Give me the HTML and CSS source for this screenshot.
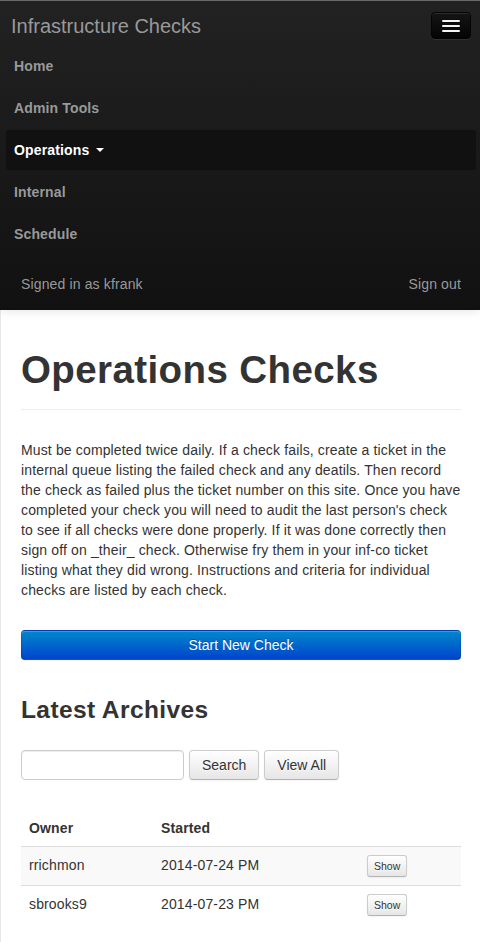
FILE: index.html
```html
<!DOCTYPE html>
<html lang="en">
<head>
<meta charset="utf-8">
<title>Operations Checks</title>
<link rel="stylesheet" href="styles.css">
</head>
<body>
<div class="page">
  <header class="navbar">
    <div class="navbar-head">
      <a class="brand" href="#">Infrastructure Checks</a>
      <button class="btn-navbar" type="button" aria-label="Toggle navigation">
        <span class="icon-bar"></span>
        <span class="icon-bar"></span>
        <span class="icon-bar"></span>
      </button>
    </div>
    <ul class="nav">
      <li><a href="#">Home</a></li>
      <li><a href="#">Admin Tools</a></li>
      <li class="active"><a href="#">Operations <b class="caret"></b></a></li>
      <li><a href="#">Internal</a></li>
      <li><a href="#">Schedule</a></li>
    </ul>
    <div class="navbar-user">
      <span>Signed in as kfrank</span>
      <a href="#">Sign out</a>
    </div>
  </header>

  <main class="container">
    <div class="page-header">
      <h1>Operations Checks</h1>
    </div>
    <p class="intro">Must be completed twice daily. If a check fails, create a ticket in the internal queue listing the failed check and any deatils. Then record the check as failed plus the ticket number on this site. Once you have completed your check you will need to audit the last person's check to see if all checks were done properly. If it was done correctly then sign off on _their_ check. Otherwise fry them in your inf-co ticket listing what they did wrong. Instructions and criteria for individual checks are listed by each check.</p>

    <a class="btn btn-primary btn-block" href="#">Start New Check</a>

    <h3>Latest Archives</h3>

    <form class="search-form">
      <input class="search-input" type="text">
      <button class="btn" type="button">Search</button>
      <button class="btn" type="button">View All</button>
    </form>

    <table class="table">
      <colgroup>
        <col class="col-owner">
        <col class="col-started">
        <col>
      </colgroup>
      <thead>
        <tr><th>Owner</th><th>Started</th><th></th></tr>
      </thead>
      <tbody>
        <tr><td>rrichmon</td><td>2014-07-24 PM</td><td><a class="btn btn-mini" href="#">Show</a></td></tr>
        <tr><td>sbrooks9</td><td>2014-07-23 PM</td><td><a class="btn btn-mini" href="#">Show</a></td></tr>
      </tbody>
    </table>
  </main>
</div>
</body>
</html>
```

FILE: styles.css
```css
html, body {
  margin: 0;
  padding: 0;
}

body {
  font-family: "Liberation Sans", Arial, Helvetica, sans-serif;
  font-size: 14px;
  line-height: 20px;
  letter-spacing: 0.01em;
  color: #333;
  background: #fff;
}

.page {
  min-height: 942px;
  box-sizing: border-box;
}

/* Navbar */
.navbar {
  position: relative;
  z-index: 2;
  height: 310px;
  box-sizing: border-box;
  border-top: 1px solid #6a6a6a;
  background: linear-gradient(to bottom, #222222, #111111);
  box-shadow: 0 1px 10px rgba(0, 0, 0, 0.1);
}

.navbar-head {
  display: flex;
  justify-content: space-between;
  align-items: flex-start;
  height: 45px;
}

.brand {
  margin-top: 15px;
  padding-left: 11px;
  font-size: 20px;
  line-height: 20px;
  letter-spacing: 0;
  color: #999;
  text-decoration: none;
}

.btn-navbar {
  margin: 11px 9px 0 0;
  width: 40px;
  height: 27px;
  padding: 0;
  box-sizing: border-box;
  display: flex;
  flex-direction: column;
  align-items: center;
  justify-content: center;
  gap: 3px;
  border: 1px solid #040404;
  border-radius: 4px;
  background: linear-gradient(to bottom, #151515, #040404);
  box-shadow: inset 0 1px 0 rgba(255, 255, 255, 0.1), 0 1px 0 rgba(255, 255, 255, 0.075);
}

.icon-bar {
  display: block;
  width: 18px;
  height: 2px;
  border-radius: 1px;
  background: #f5f5f5;
  box-shadow: 0 1px 0 rgba(0, 0, 0, 0.25);
}

.nav {
  list-style: none;
  margin: 0 4px 0 6px;
  padding: 0;
}

.nav a {
  display: block;
  padding: 10px 8px;
  margin-bottom: 2px;
  line-height: 20px;
  font-weight: bold;
  color: #999;
  text-decoration: none;
  border-radius: 3px;
}

.nav .active a {
  background: #111;
  color: #fff;
}

.caret {
  display: inline-block;
  width: 0;
  height: 0;
  margin-left: 3px;
  vertical-align: top;
  margin-top: 8px;
  border-top: 4px solid #fff;
  border-left: 4px solid transparent;
  border-right: 4px solid transparent;
}

.navbar-user {
  display: flex;
  justify-content: space-between;
  padding: 18px 19px 0 21px;
  line-height: 20px;
  color: #999;
}

.navbar-user a {
  color: #999;
  text-decoration: none;
}

/* Content */
.container {
  border-left: 1px solid #e8e8e8;
  padding: 40px 19px 18px 20px;
  min-height: 632px;
  box-sizing: border-box;
}

.page-header {
  padding-bottom: 19px;
  margin-bottom: 30px;
  border-bottom: 1px solid #eee;
}

.page-header h1 {
  margin: 0;
  font-size: 38.5px;
  line-height: 40px;
  font-weight: bold;
  letter-spacing: 0.4px;
  color: #333;
}

.intro {
  margin: 0 0 30px;
}

.btn {
  display: inline-block;
  box-sizing: border-box;
  padding: 4px 12px;
  font-family: inherit;
  font-size: 14px;
  line-height: 20px;
  letter-spacing: 0;
  color: #333;
  text-align: center;
  text-decoration: none;
  text-shadow: 0 1px 1px rgba(255, 255, 255, 0.75);
  background: linear-gradient(to bottom, #ffffff, #e6e6e6);
  border: 1px solid #cccccc;
  border-bottom-color: #b3b3b3;
  border-radius: 4px;
  box-shadow: inset 0 1px 0 rgba(255, 255, 255, 0.2), 0 1px 2px rgba(0, 0, 0, 0.05);
  cursor: pointer;
}

.btn-primary {
  color: #fff;
  text-shadow: 0 -1px 0 rgba(0, 0, 0, 0.25);
  background: linear-gradient(to bottom, #0088cc, #0044cc);
  border-color: rgba(0, 0, 0, 0.1) rgba(0, 0, 0, 0.1) rgba(0, 0, 0, 0.25);
}

.btn-block {
  display: block;
  width: 100%;
  height: 30px;
}

h3 {
  margin: 30px 0 20px;
  font-size: 24.5px;
  line-height: 40px;
  font-weight: bold;
  letter-spacing: 0.4px;
  color: #333;
}

.search-form {
  display: flex;
  gap: 5px;
  height: 30px;
  margin: 0 0 30px;
}

.search-input {
  width: 163px;
  height: 30px;
  box-sizing: border-box;
  padding: 4px 6px;
  font-family: inherit;
  font-size: 14px;
  border: 1px solid #ccc;
  border-radius: 4px;
  box-shadow: inset 0 1px 1px rgba(0, 0, 0, 0.075);
  background: #fff;
}

.search-form .btn {
  height: 30px;
}

.table {
  width: 100%;
  border-collapse: collapse;
  border-spacing: 0;
}

.col-owner {
  width: 132px;
}

.col-started {
  width: 206px;
}

.table th,
.table td {
  padding: 8px;
  line-height: 20px;
  text-align: left;
  vertical-align: top;
}

.table th {
  font-weight: bold;
}

.table tbody td {
  border-top: 1px solid #ddd;
}

.table tbody tr:nth-child(odd) td {
  background: #f9f9f9;
}

.btn-mini {
  height: 22px;
  padding: 0 6px;
  font-size: 10.5px;
  line-height: 20px;
  border-radius: 3px;
}
```
